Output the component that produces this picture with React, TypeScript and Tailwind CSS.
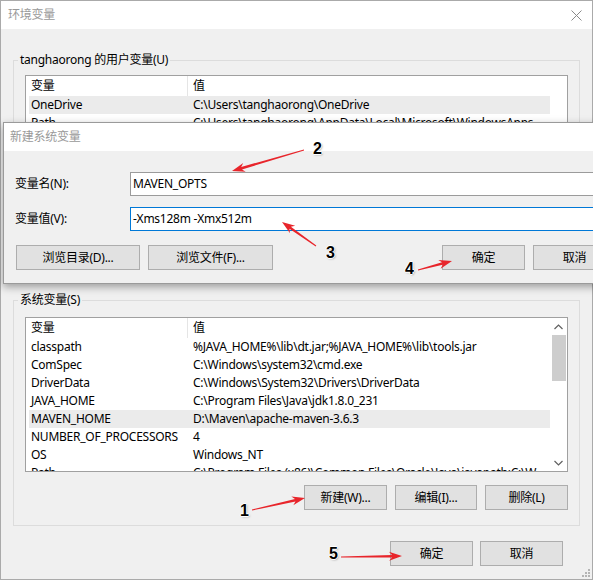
import React from "react";

type Row = [string, string];

const userVars: Row[] = [
  ["OneDrive", "C:\\Users\\tanghaorong\\OneDrive"],
  ["Path", "C:\\Users\\tanghaorong\\AppData\\Local\\Microsoft\\WindowsApps"],
  ["TEMP", "C:\\Users\\tanghaorong\\AppData\\Local\\Temp"],
  ["TMP", "C:\\Users\\tanghaorong\\AppData\\Local\\Temp"],
];

const sysVars: Row[] = [
  ["classpath", "%JAVA_HOME%\\lib\\dt.jar;%JAVA_HOME%\\lib\\tools.jar"],
  ["ComSpec", "C:\\Windows\\system32\\cmd.exe"],
  ["DriverData", "C:\\Windows\\System32\\Drivers\\DriverData"],
  ["JAVA_HOME", "C:\\Program Files\\Java\\jdk1.8.0_231"],
  ["MAVEN_HOME", "D:\\Maven\\apache-maven-3.6.3"],
  ["NUMBER_OF_PROCESSORS", "4"],
  ["OS", "Windows_NT"],
  ["Path", "C:\\Program Files (x86)\\Common Files\\Oracle\\Java\\javapath;C:\\W"],
  ["PATHEXT", ".COM;.EXE;.BAT;.CMD"],
];

function Btn({ label, className = "" }: { label: string; className?: string }) {
  return (
    <div
      className={`h-[25px] shrink-0 flex items-center justify-center bg-[#e1e1e1] border border-[#adadad] text-black ${className}`}
    >
      {label}
    </div>
  );
}

function VarList({
  rows,
  selected,
  scroll,
}: {
  rows: Row[];
  selected: number;
  scroll: boolean;
}) {
  return (
    <div className="h-[155px] bg-white border border-[#a0a0a0] flex overflow-hidden">
      <div className="flex-1 min-w-0 flex flex-col overflow-hidden">
        {/* header */}
        <div className="h-[20px] shrink-0 flex items-center">
          <div className="w-[162px] h-full pl-[5px] flex items-center border-r border-[#e5e5e5]">
            变量
          </div>
          <div className="pl-[5px]">值</div>
        </div>
        <div className="pl-[3px]">
          {rows.map((r, i) => (
            <div
              key={r[0]}
              className={`h-[18px] flex items-center whitespace-nowrap ${
                i === selected ? "bg-[#ebebeb]" : ""
              }`}
            >
              <div className="w-[159px] shrink-0 pl-[2px]">{r[0]}</div>
              <div className="pl-[5px] flex-1 min-w-0 overflow-hidden">{r[1]}</div>
            </div>
          ))}
        </div>
      </div>
      <div className="w-[17px] shrink-0 flex flex-col">
        {scroll && (
          <>
            <div className="h-[17px] flex items-center justify-center">
              <svg width="9" height="6" viewBox="0 0 9 6">
                <polyline points="0.5,5 4.5,1 8.5,5" fill="none" stroke="#606060" strokeWidth="1.2" />
              </svg>
            </div>
            <div className="h-[46px] ml-[2px] mr-[1px] bg-[#cdcdcd]" />
            <div className="flex-1" />
            <div className="h-[17px] flex items-center justify-center">
              <svg width="9" height="6" viewBox="0 0 9 6">
                <polyline points="0.5,1 4.5,5 8.5,1" fill="none" stroke="#606060" strokeWidth="1.2" />
              </svg>
            </div>
          </>
        )}
      </div>
    </div>
  );
}

function arrow(x1: number, y1: number, x2: number, y2: number) {
  const dx = x2 - x1;
  const dy = y2 - y1;
  const len = Math.hypot(dx, dy);
  const ux = dx / len;
  const uy = dy / len;
  const px = -uy;
  const py = ux;
  const head = 13;
  const back = 10;
  const hw = 4.5;
  const bx = x2 - ux * head;
  const by = y2 - uy * head;
  const nx = x2 - ux * back;
  const ny = y2 - uy * back;
  const pts = [
    [x1 + px * 0.5, y1 + py * 0.5],
    [nx + px * 1.3, ny + py * 1.3],
    [bx + px * hw, by + py * hw],
    [x2, y2],
    [bx - px * hw, by - py * hw],
    [nx - px * 1.3, ny - py * 1.3],
    [x1 - px * 0.5, y1 - py * 0.5],
  ];
  return pts.map((p) => `${p[0].toFixed(1)},${p[1].toFixed(1)}`).join(" ");
}

const arrows = [
  [304, 150, 232, 171],
  [316, 246, 282, 222],
  [418, 270, 452, 261],
  [252, 510, 305, 498],
  [341, 557, 402, 556],
];

const numbers = [
  { n: "2", x: 313, y: 141 },
  { n: "3", x: 326, y: 245 },
  { n: "4", x: 405, y: 261 },
  { n: "1", x: 240, y: 503 },
  { n: "5", x: 329, y: 546 },
];

export default function App() {
  return (
    <div className="relative w-[593px] h-[581px] overflow-hidden bg-white text-[12px] leading-[16px] tracking-[-0.25px] text-black font-['Noto_Sans','Noto_Sans_CJK_SC',sans-serif]">
      {/* main window */}
      <div className="w-[593px] h-[580px] border border-[#aaaaaa] bg-[#f0f0f0] flex flex-col">
        <div className="h-[28px] shrink-0 bg-white flex items-center justify-between pl-[7px] pr-[10px]">
          <span className="text-[#999999]">环境变量</span>
          <svg width="11" height="11" viewBox="0 0 11 11">
            <path d="M0.5 0.5 L10.5 10.5 M10.5 0.5 L0.5 10.5" stroke="#8a8a8a" strokeWidth="1" />
          </svg>
        </div>

        <div className="flex-1 min-w-0 flex flex-col px-3 pt-[23px] relative">
          <fieldset className="min-w-0 h-[231px] border border-[#dcdcdc] px-[11px]">
            <legend className="-ml-[7px] px-[2px]">tanghaorong 的用户变量(U)</legend>
            <div className="mt-[7px]">
              <VarList rows={userVars} selected={0} scroll={false} />
            </div>
            <div className="mt-[14px] flex justify-end gap-2">
              <Btn label="新建(N)..." className="w-[83px]" />
              <Btn label="编辑(E)..." className="w-[82px]" />
              <Btn label="删除(D)" className="w-[83px]" />
            </div>
          </fieldset>

          <fieldset className="min-w-0 mt-[9px] border border-[#dcdcdc] px-[11px] pb-[15px]">
            <legend className="-ml-[7px] px-[2px]">系统变量(S)</legend>
            <div className="mt-[9px]">
              <VarList rows={sysVars} selected={4} scroll={true} />
            </div>
            <div className="mt-[13px] flex justify-end gap-2">
              <Btn label="新建(W)..." className="w-[83px]" />
              <Btn label="编辑(I)..." className="w-[82px]" />
              <Btn label="删除(L)" className="w-[83px]" />
            </div>
          </fieldset>

          <div className="mt-[15px] flex justify-end gap-[7px] pr-[17px]">
            <Btn label="确定" className="w-[83px]" />
            <Btn label="取消" className="w-[83px]" />
          </div>

          {/* resize grip */}
          <svg className="absolute right-[1px] bottom-[1px]" width="10" height="10" viewBox="0 0 10 10">
            {[
              [8, 2],
              [5, 5],
              [8, 5],
              [2, 8],
              [5, 8],
              [8, 8],
            ].map(([cx, cy]) => (
              <rect key={`${cx}-${cy}`} x={cx - 1} y={cy - 1} width="2" height="2" fill="#b4b4b4" />
            ))}
          </svg>
        </div>
      </div>

      {/* new system variable dialog */}
      <div className="absolute left-[3px] top-[122px] w-[640px] h-[162px] border border-[#9a9a9a] bg-[#f0f0f0] shadow-[0_3px_8px_rgba(0,0,0,0.35)] flex flex-col">
        <div className="h-[28px] shrink-0 bg-white flex items-center pl-[6px]">
          <span className="text-[#999999]">新建系统变量</span>
        </div>
        <div className="flex-1 pl-[11px] pt-[21px]">
          <div className="flex items-center h-[24px]">
            <div className="w-[115px]">变量名(N):</div>
            <div className="w-[486px] h-[24px] bg-white border border-[#9b9b9b] flex items-center pl-[2px]">
              MAVEN_OPTS
            </div>
          </div>
          <div className="flex items-center h-[24px] mt-[11px]">
            <div className="w-[115px]">变量值(V):</div>
            <div className="w-[486px] h-[24px] bg-white border border-[#0078d7] flex items-center pl-[2px]">
              -Xms128m -Xmx512m
            </div>
          </div>
          <div className="flex mt-[14px] pl-[1px]">
            <Btn label="浏览目录(D)..." className="w-[124px]" />
            <Btn label="浏览文件(F)..." className="w-[125px] ml-[8px]" />
            <Btn label="确定" className="w-[83px] ml-[169px]" />
            <Btn label="取消" className="w-[83px] ml-[8px]" />
          </div>
        </div>
      </div>

      {/* annotations */}
      <svg className="absolute left-0 top-0 pointer-events-none" width="593" height="581">
        {arrows.map(([a, b, c, d], i) => (
          <polygon key={i} points={arrow(a, b, c, d)} fill="#e8252b" />
        ))}
      </svg>
      {numbers.map((m) => (
        <span
          key={m.n}
          className="absolute text-[16px] leading-none font-bold tracking-normal text-black font-['Liberation_Sans',Arial,sans-serif] [text-shadow:-1px_0_#fff,1px_0_#fff,0_-1px_#fff,0_1px_#fff,1px_1px_2px_#999]"
          style={{ left: m.x, top: m.y }}
        >
          {m.n}
        </span>
      ))}
    </div>
  );
}
